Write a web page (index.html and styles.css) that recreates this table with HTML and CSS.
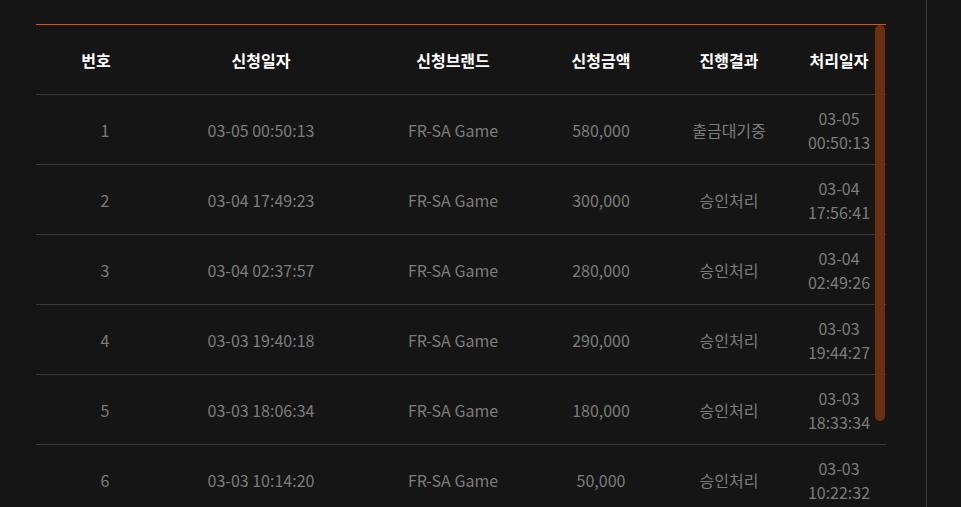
FILE: index.html
```html
<!DOCTYPE html>
<html lang="en">
<head>
<meta charset="utf-8">
<link rel="stylesheet" href="styles.css">
</head>
<body>
<div class="page">
  <div class="main">
    <div class="scroll">
      <table class="list">
        <colgroup>
          <col class="c1"><col class="c2"><col class="c3"><col class="c4"><col class="c5"><col class="c6">
        </colgroup>
        <thead>
          <tr><th>번호</th><th>신청일자</th><th>신청브랜드</th><th>신청금액</th><th>진행결과</th><th>처리일자</th></tr>
        </thead>
        <tbody>
          <tr><td>1</td><td>03-05 00:50:13</td><td>FR-SA Game</td><td>580,000</td><td>출금대기중</td><td>03-05<br>00:50:13</td></tr>
          <tr><td>2</td><td>03-04 17:49:23</td><td>FR-SA Game</td><td>300,000</td><td>승인처리</td><td>03-04<br>17:56:41</td></tr>
          <tr><td>3</td><td>03-04 02:37:57</td><td>FR-SA Game</td><td>280,000</td><td>승인처리</td><td>03-04<br>02:49:26</td></tr>
          <tr><td>4</td><td>03-03 19:40:18</td><td>FR-SA Game</td><td>290,000</td><td>승인처리</td><td>03-03<br>19:44:27</td></tr>
          <tr><td>5</td><td>03-03 18:06:34</td><td>FR-SA Game</td><td>180,000</td><td>승인처리</td><td>03-03<br>18:33:34</td></tr>
          <tr><td>6</td><td>03-03 10:14:20</td><td>FR-SA Game</td><td>50,000</td><td>승인처리</td><td>03-03<br>10:22:32</td></tr>
        </tbody>
      </table>
      <div class="thumb"></div>
    </div>
  </div>
  <div class="side"></div>
</div>
</body>
</html>
```

FILE: styles.css
```css
html, body {
  margin: 0;
  padding: 0;
  background: #151515;
  height: 100%;
  overflow: hidden;
}
body {
  font-family: "Noto Sans CJK KR", "Noto Sans", sans-serif;
}
.page {
  display: flex;
  height: 507px;
}
.main {
  width: 927px;
  padding: 24px 0 0 36px;
  box-sizing: border-box;
  border-right: 1px solid #3a3a3a;
}
.scroll {
  position: relative;
  width: 850px;
  border-top: 1px solid #e0520c;
}
.list {
  width: 850px;
  border-collapse: collapse;
  table-layout: fixed;
}
.c1 { width: 120px; }
.c2 { width: 210px; }
.c3 { width: 174px; }
.c4 { width: 122px; }
.c5 { width: 134px; }
.c6 { width: 90px; }
.list th {
  height: 69px;
  padding: 0;
  color: #ffffff;
  font-weight: 700;
  font-size: 16px;
  text-align: center;
  border-bottom: 1px solid #3a3a3a;
}
.list td {
  height: 69px;
  padding: 0;
  color: #7c7c7c;
  font-size: 16px;
  line-height: 24px;
  text-align: center;
  border-bottom: 1px solid #3a3a3a;
}
.list td:first-child {
  padding-left: 18px;
}
.list th:last-child,
.list td:last-child {
  padding-right: 4px;
}
.thumb {
  position: absolute;
  top: 0;
  right: 1px;
  width: 10px;
  height: 396px;
  background: #6a2f10;
  border-radius: 5px;
}
.side {
  flex: 1;
}
```
